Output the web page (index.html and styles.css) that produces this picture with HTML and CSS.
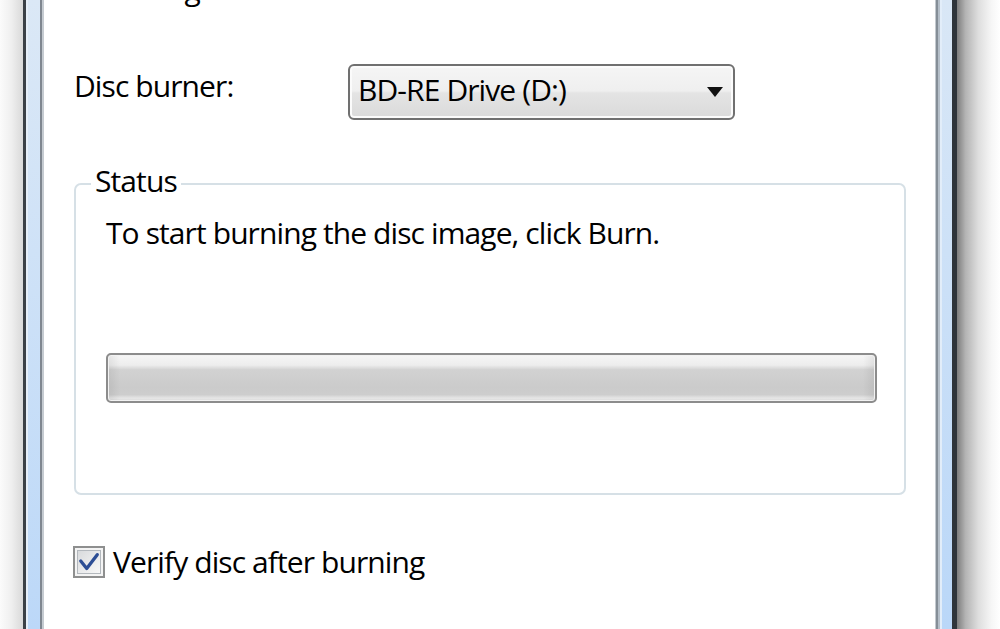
FILE: index.html
```html
<!DOCTYPE html>
<html lang="en">
<head>
<meta charset="utf-8">
<title>Windows Disc Image Burner</title>
<link rel="stylesheet" href="styles.css">
</head>
<body>
<div class="screen">
  <div class="shadow-l"></div>
  <div class="frame-l"></div>
  <div class="content">
    <div class="row row-file"><span class="label">Disc image file:</span></div>
    <div class="row row-burner">
      <span class="label">Disc burner:</span>
      <div class="combo">
        <span class="combo-text">BD-RE Drive (D:)</span>
        <svg class="arrow" width="16" height="10" viewBox="0 0 16 10"><path d="M0 0 H16 L8 10 Z" fill="#111"/></svg>
      </div>
    </div>
    <fieldset class="status">
      <legend>Status</legend>
      <div class="status-body">
        <p class="status-text">To start burning the disc image, click Burn.</p>
        <div class="progress"></div>
      </div>
    </fieldset>
    <label class="check">
      <span class="box">
        <span class="box-inner">
          <svg width="24" height="22" viewBox="0 0 24 22"><path d="M3 10 L9.5 18 L21 3" fill="none" stroke="#2d4e95" stroke-width="3.6" stroke-linejoin="round" stroke-linecap="round"/></svg>
        </span>
      </span>
      <span class="check-text">Verify disc after burning</span>
    </label>
  </div>
  <div class="frame-r"></div>
  <div class="shadow-r"></div>
</div>
</body>
</html>
```
FILE: styles.css
```css
html, body {
  margin: 0;
  padding: 0;
  background: #ffffff;
  overflow: hidden;
}

.screen {
  display: flex;
  width: 1000px;
  height: 629px;
  overflow: hidden;
  font-family: "Open Sans", "Noto Sans", sans-serif;
}

.shadow-l {
  width: 23px;
  flex: none;
  background: linear-gradient(to right, #fbfbfb, #efefef 50%, #d9d9d9);
}

.frame-l {
  width: 21px;
  flex: none;
  background:
    linear-gradient(to right,
      #3b4147 0, #3b4147 3px,
      #e6eff9 3px, #e6eff9 5px,
      transparent 5px, transparent 17px,
      #7f8790 17px, #7f8790 19px,
      #c5cbd1 19px, #c5cbd1 21px),
    linear-gradient(to bottom, #dbe8f6 0%, #cfe2f7 40%, #bcd8f8 100%);
}

.frame-r {
  width: 22px;
  flex: none;
  background:
    linear-gradient(to right,
      #c3c9cf 0, #c3c9cf 1px,
      #858e97 1px, #858e97 3px,
      #b4bec8 3px, #b4bec8 5px,
      #e2edf9 5px, #e2edf9 7px,
      transparent 7px, transparent 17px,
      #2e343a 17px, #2e343a 22px),
    linear-gradient(to bottom, #d9e7f6 0%, #cde1f7 40%, #bad7f8 100%);
}

.shadow-r {
  width: 43px;
  flex: none;
  background: linear-gradient(to right, #7d7d7d, #b4b4b4 20%, #dedede 50%, #f6f6f6 80%, #ffffff);
}

.content {
  flex: 1;
  min-width: 0;
  background: #ffffff;
  padding: 0 29px 0 30px;
  display: flex;
  flex-direction: column;
  font-size: 30px;
  line-height: 40px;
  letter-spacing: -0.9px;
  color: #000000;
}

.row-file {
  margin-top: -31px;
  height: 40px;
  white-space: nowrap;
}

.row-burner {
  display: flex;
  align-items: flex-start;
  margin-top: 55px;
}

.row-burner .label {
  width: 274px;
  flex: none;
  margin-top: 2px;
}

.combo {
  width: 387px;
  height: 56px;
  box-sizing: border-box;
  border: 2px solid #707070;
  border-radius: 6px;
  display: flex;
  align-items: center;
  justify-content: space-between;
  padding: 0 10px 4px 8px;
  background: linear-gradient(to bottom, #f5f5f5 0%, #efefef 48%, #e4e4e4 52%, #dadada 100%);
  box-shadow: inset 0 0 0 2px #fbfbfb;
}

.combo-text {
  white-space: nowrap;
}

.arrow {
  display: block;
  margin-top: 4px;
}

.status {
  margin: 41px 0 0 0;
  padding: 0;
  min-width: 0;
  border: 2px solid #d6e0e6;
  border-radius: 7px;
}

.status legend {
  margin-left: 15px;
  padding: 0 4px 5px;
  line-height: 40px;
}

.status-body {
  padding: 7px 27px 90px 30px;
}

.status-text {
  margin: 0;
  white-space: nowrap;
}

.progress {
  margin-top: 100px;
  height: 50px;
  box-sizing: border-box;
  border: 2px solid #8c8c8c;
  border-radius: 5px;
  background:
    linear-gradient(to right, rgba(0,0,0,0.07), rgba(0,0,0,0) 12px, rgba(0,0,0,0) calc(100% - 12px), rgba(0,0,0,0.07)),
    linear-gradient(to bottom, #f6f6f6 0%, #ededed 22%, #d2d2d2 32%, #cbcbcb 70%, #cdcdcd 86%, #e6e6e6 94%, #d9d9d9 100%);
  box-shadow: inset 0 0 0 1px #f2f2f2;
}

.check {
  display: flex;
  align-items: flex-start;
  gap: 8px;
  margin-top: 47px;
  margin-left: -1px;
}

.box {
  width: 32px;
  height: 32px;
  box-sizing: border-box;
  margin-top: 4px;
  border: 2px solid #8e8f8f;
  background: #f4f4f4;
  padding: 2px;
  flex: none;
}

.box-inner {
  display: flex;
  align-items: center;
  justify-content: center;
  width: 100%;
  height: 100%;
  box-sizing: border-box;
  border: 1px solid #b3b8bd;
  background: linear-gradient(135deg, #d8dadc 0%, #e9eaeb 50%, #f7f7f7 100%);
}

.box-inner svg {
  display: block;
}

.check-text {
  white-space: nowrap;
}
```
